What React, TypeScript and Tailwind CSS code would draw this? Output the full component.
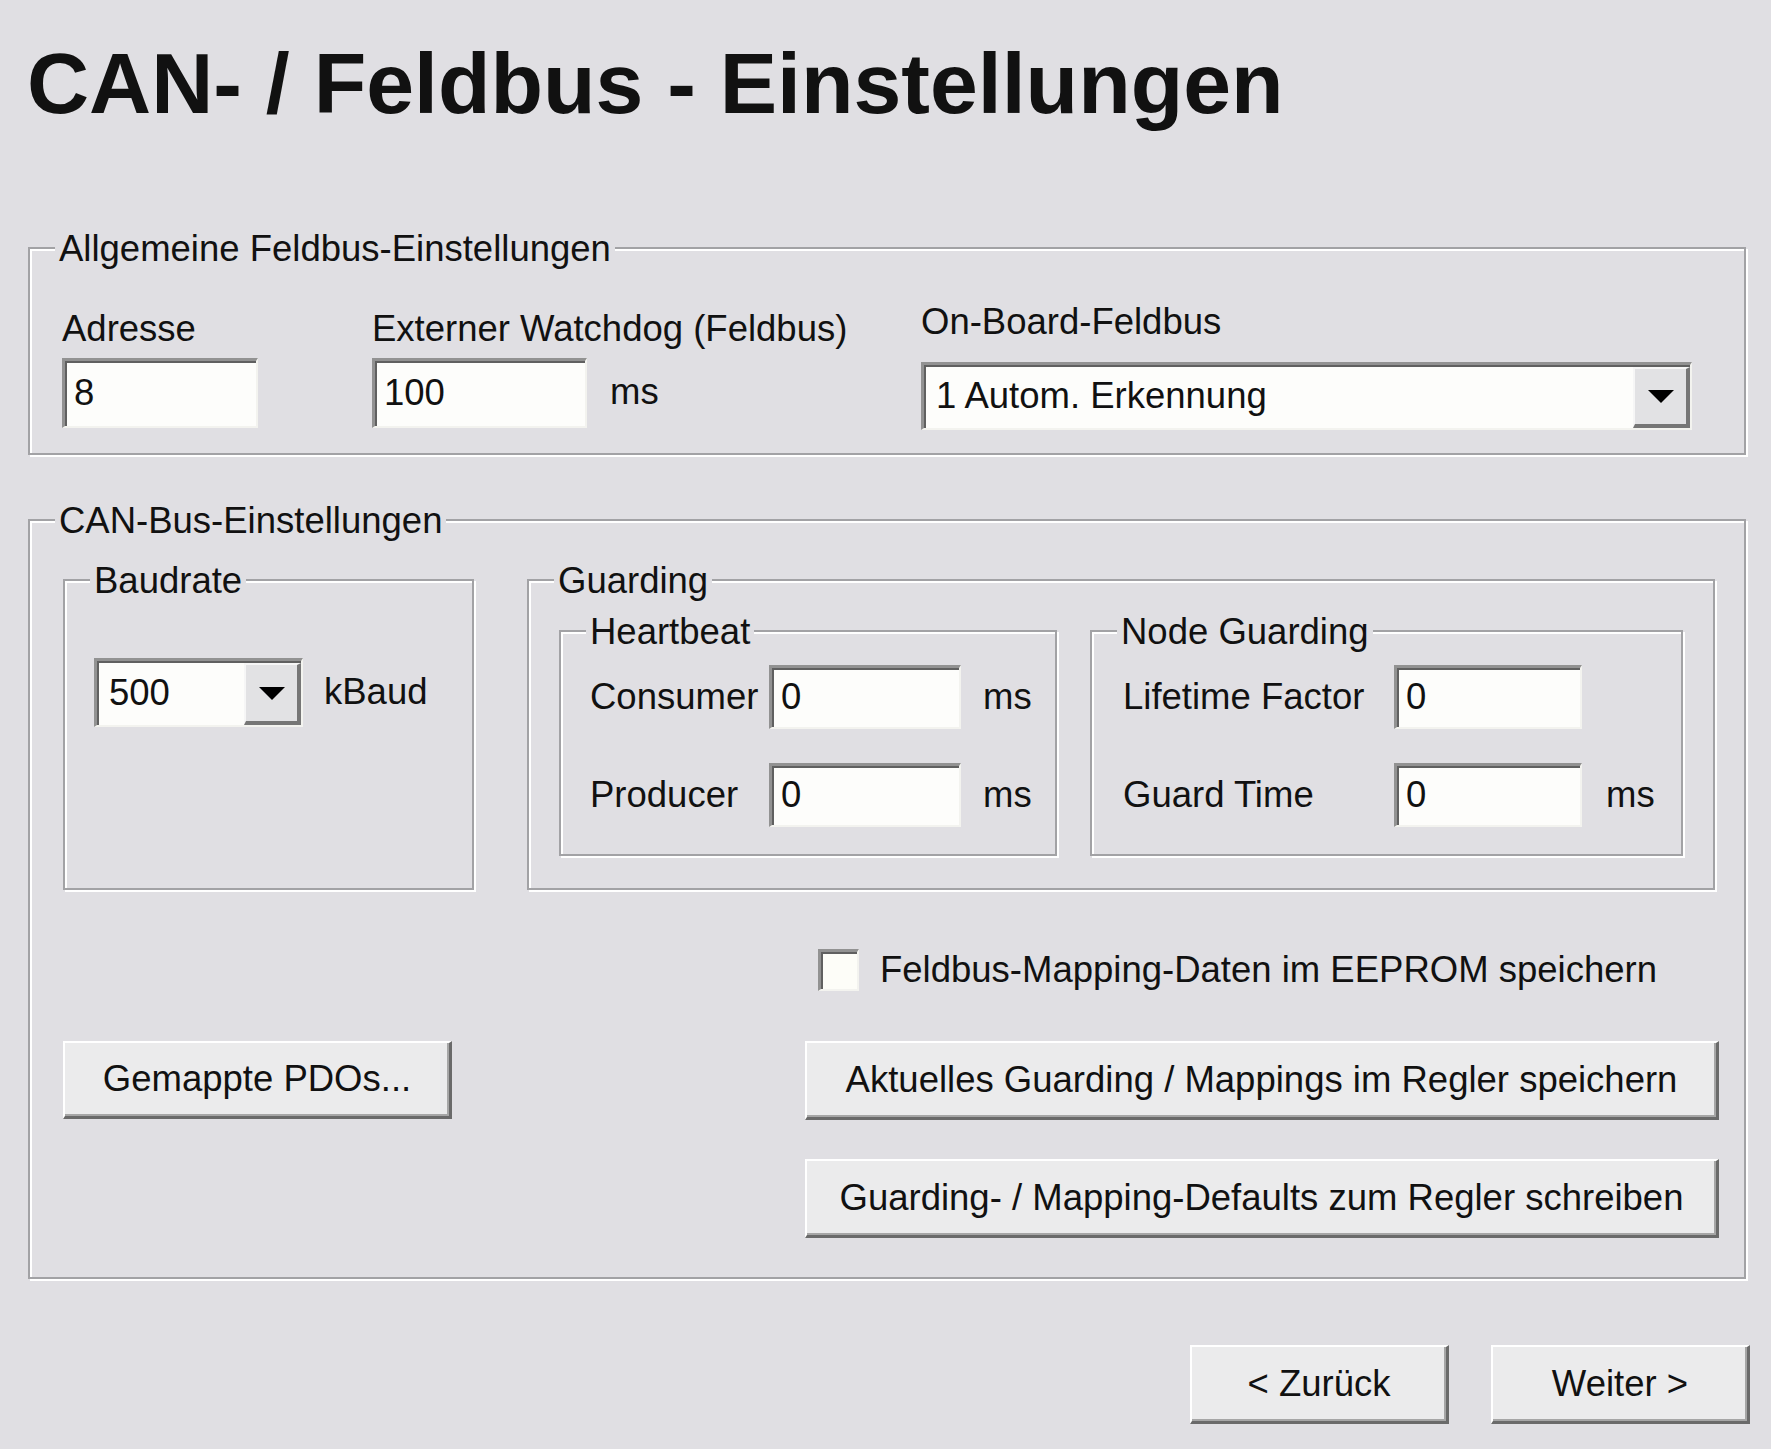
import React from "react";

function Group({
  label,
  className,
  children,
}: {
  label: string;
  className: string;
  children?: React.ReactNode;
}) {
  return (
    <div
      className={`relative border-2 border-[#a2a2a5] shadow-[inset_2px_2px_0_#ffffff,2px_2px_0_#ffffff] ${className}`}
    >
      <span className="absolute top-[-18px] left-[25px] bg-[#e0dfe3] px-[4px] leading-none whitespace-nowrap">
        {label}
      </span>
      {children}
    </div>
  );
}

function Edit({ value, className }: { value: string; className: string }) {
  return (
    <div
      className={`flex items-center bg-[#fdfdfb] border-t-[3px] border-l-[3px] border-t-[#929292] border-l-[#929292] border-b-2 border-r-2 border-b-[#f3f3ef] border-r-[#f3f3ef] shadow-[inset_2px_2px_0_#606060] pl-[9px] ${className}`}
    >
      {value}
    </div>
  );
}

function Combo({ value, className }: { value: string; className: string }) {
  return (
    <div
      className={`flex items-stretch bg-[#fdfdfb] border-t-[3px] border-l-[3px] border-t-[#929292] border-l-[#929292] border-b-2 border-r-2 border-b-[#f3f3ef] border-r-[#f3f3ef] shadow-[inset_2px_2px_0_#606060] ${className}`}
    >
      <div className="flex-1 flex items-center pl-[12px]">{value}</div>
      <div className="w-[57px] mt-[2px] flex items-center justify-center bg-[#e2e2e4] border-t-2 border-l-2 border-t-[#f6f6f6] border-l-[#f6f6f6] border-b-[4px] border-r-[4px] border-b-[#767676] border-r-[#767676]">
        <svg width="26" height="13" viewBox="0 0 26 13">
          <path d="M0 0H26L13 13Z" fill="#000000" />
        </svg>
      </div>
    </div>
  );
}

function Btn({
  children,
  className,
}: {
  children: React.ReactNode;
  className: string;
}) {
  return (
    <div
      className={`flex items-center justify-center whitespace-nowrap bg-[#ebebec] border-t-2 border-l-2 border-t-white border-l-white border-b-[3px] border-r-[3px] border-b-[#6a6a6a] border-r-[#6a6a6a] shadow-[inset_-2px_-2px_0_#a6a6a6] ${className}`}
    >
      {children}
    </div>
  );
}

export default function App() {
  return (
    <div className="w-[1771px] h-[1449px] overflow-hidden bg-[#e0dfe3] text-[#111111] font-['Liberation_Sans',Arial,sans-serif] text-[36.5px] leading-none">
      <div className="pt-[40px] pl-[27px] text-[86px] font-bold leading-none whitespace-nowrap h-[125px]">
        CAN- / Feldbus - Einstellungen
      </div>

      {/* Allgemeine Feldbus-Einstellungen */}
      <Group
        label="Allgemeine Feldbus-Einstellungen"
        className="ml-[28px] mt-[122px] w-[1718px] h-[208px] pt-[55px] pl-[32px] flex items-start"
      >
        <div className="w-[310px] mt-[7px]">
          <div className="whitespace-nowrap">Adresse</div>
          <Edit value="8" className="mt-[10px] w-[196px] h-[70px]" />
        </div>
        <div className="w-[549px] mt-[7px]">
          <div className="whitespace-nowrap">Externer Watchdog (Feldbus)</div>
          <div className="mt-[10px] flex items-center gap-[23px]">
            <Edit value="100" className="w-[215px] h-[70px]" />
            <span>ms</span>
          </div>
        </div>
        <div className="w-[771px]">
          <div className="whitespace-nowrap">On-Board-Feldbus</div>
          <Combo value="1 Autom. Erkennung" className="mt-[21px] w-[771px] h-[68px]" />
        </div>
      </Group>

      {/* CAN-Bus-Einstellungen */}
      <Group
        label="CAN-Bus-Einstellungen"
        className="ml-[28px] mt-[64px] w-[1718px] h-[760px] pt-[58px] pl-[33px]"
      >
        <div className="flex gap-[53px]">
          <Group label="Baudrate" className="w-[411px] h-[311px] pt-[77px] pl-[29px]">
            <div className="flex items-center gap-[21px]">
              <Combo value="500" className="w-[209px] h-[69px]" />
              <span>kBaud</span>
            </div>
          </Group>
          <Group
            label="Guarding"
            className="w-[1188px] h-[311px] pt-[49px] pl-[30px] flex items-start gap-[33px]"
          >
            <Group label="Heartbeat" className="w-[498px] h-[226px] pt-[33px] pl-[29px]">
              <div className="flex items-center h-[64px]">
                <div className="w-[179px] whitespace-nowrap">Consumer</div>
                <Edit value="0" className="w-[192px] h-[64px]" />
                <span className="ml-[22px]">ms</span>
              </div>
              <div className="flex items-center h-[64px] mt-[34px]">
                <div className="w-[179px] whitespace-nowrap">Producer</div>
                <Edit value="0" className="w-[192px] h-[64px]" />
                <span className="ml-[22px]">ms</span>
              </div>
            </Group>
            <Group label="Node Guarding" className="w-[593px] h-[226px] pt-[33px] pl-[31px]">
              <div className="flex items-center h-[64px]">
                <div className="w-[271px] whitespace-nowrap">Lifetime Factor</div>
                <Edit value="0" className="w-[188px] h-[64px]" />
              </div>
              <div className="flex items-center h-[64px] mt-[34px]">
                <div className="w-[271px] whitespace-nowrap">Guard Time</div>
                <Edit value="0" className="w-[188px] h-[64px]" />
                <span className="ml-[24px]">ms</span>
              </div>
            </Group>
          </Group>
        </div>

        <div className="flex mt-[59px]">
          <div className="w-[742px] pt-[92px]">
            <Btn className="w-[389px] h-[78px]">Gemappte PDOs...</Btn>
          </div>
          <div>
            <div className="flex items-center h-[42px] pl-[13px] gap-[21px]">
              <div className="w-[41px] h-[42px] bg-[#fdfdf8] border-t-[3px] border-l-[3px] border-t-[#929292] border-l-[#929292] border-b-2 border-r-2 border-b-[#f3f3ef] border-r-[#f3f3ef] shadow-[inset_2px_2px_0_#606060]" />
              <span className="whitespace-nowrap">Feldbus-Mapping-Daten im EEPROM speichern</span>
            </div>
            <Btn className="mt-[50px] w-[914px] h-[79px]">
              Aktuelles Guarding / Mappings im Regler speichern
            </Btn>
            <Btn className="mt-[39px] w-[914px] h-[79px]">
              Guarding- / Mapping-Defaults zum Regler schreiben
            </Btn>
          </div>
        </div>
      </Group>

      <div className="mt-[66px] pr-[21px] flex justify-end gap-[42px]">
        <Btn className="w-[259px] h-[79px]">&lt; Zurück</Btn>
        <Btn className="w-[259px] h-[79px]">Weiter &gt;</Btn>
      </div>
    </div>
  );
}
